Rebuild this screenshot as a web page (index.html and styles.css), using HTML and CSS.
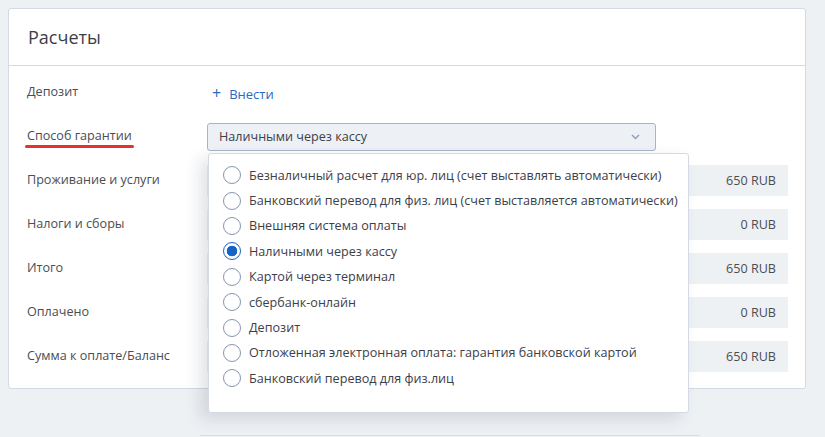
FILE: index.html
```html
<!DOCTYPE html>
<html lang="ru">

<head>
    <meta charset="UTF-8">
    <title>Расчеты</title>
    <link rel="stylesheet" href="styles.css">
</head>

<body>
    <div class="page">
        <!-- Блок расчетов -->
        <section class="card">
            <h2 class="card-title">Расчеты</h2>
            <div class="card-body">
                <div class="row">
                    <div class="label">Депозит</div>
                    <div class="value">
                        <a class="add-link" href="#"><span class="plus">+</span>Внести</a>
                    </div>
                </div>

                <div class="row">
                    <div class="label"><span class="marked">Способ гарантии</span></div>
                    <div class="value select-wrap">
                        <div class="select">
                            <span>Наличными через кассу</span>
                            <svg class="chevron" width="9" height="6" viewBox="0 0 9 6">
                                <path d="M1 1 L4.5 4.5 L8 1" fill="none" stroke="#8d9db6" stroke-width="1.4" />
                            </svg>
                        </div>

                        <!-- Выпадающий список -->
                        <ul class="options">
                            <li><i class="radio"></i>Безналичный расчет для юр. лиц (счет выставлять автоматически)</li>
                            <li><i class="radio"></i>Банковский перевод для физ. лиц (счет выставляется автоматически)</li>
                            <li><i class="radio"></i>Внешняя система оплаты</li>
                            <li class="checked"><i class="radio"></i>Наличными через кассу</li>
                            <li><i class="radio"></i>Картой через терминал</li>
                            <li><i class="radio"></i>сбербанк-онлайн</li>
                            <li><i class="radio"></i>Депозит</li>
                            <li><i class="radio"></i>Отложенная электронная оплата: гарантия банковской картой</li>
                            <li><i class="radio"></i>Банковский перевод для физ.лиц</li>
                        </ul>
                    </div>
                </div>

                <div class="row">
                    <div class="label">Проживание и услуги</div>
                    <div class="value amount">650 RUB</div>
                </div>
                <div class="row">
                    <div class="label">Налоги и сборы</div>
                    <div class="value amount">0 RUB</div>
                </div>
                <div class="row">
                    <div class="label">Итого</div>
                    <div class="value amount">650 RUB</div>
                </div>
                <div class="row">
                    <div class="label">Оплачено</div>
                    <div class="value amount">0 RUB</div>
                </div>
                <div class="row">
                    <div class="label">Сумма к оплате/Баланс</div>
                    <div class="value amount">650 RUB</div>
                </div>
            </div>
        </section>

        <div class="next-block"></div>
    </div>
</body>

</html>
```

FILE: styles.css
```css
* {
    box-sizing: border-box;
}

body {
    margin: 0;
    background-color: #eef1f4;
    font-family: "Open Sans", "Noto Sans", sans-serif;
    font-size: 12.6px;
    color: #4a4d52;
}

.page {
    padding: 8px;
    height: 437px;
    overflow: hidden;
}

/* Карточка */
.card {
    width: 798px;
    background-color: #fff;
    border: 1px solid #d3dae3;
    border-radius: 3px;
}

.card-title {
    margin: 0;
    height: 57px;
    padding: 16px 19px 0;
    font-size: 18px;
    font-weight: 400;
    color: #3c4049;
    border-bottom: 1px solid #d3dae3;
}

.card-body {
    display: flex;
    flex-direction: column;
    gap: 13px;
    padding: 11px 17px 16px 18px;
}

.row {
    display: flex;
    align-items: center;
    height: 31px;
}

.label {
    width: 180px;
    flex-shrink: 0;
    padding-bottom: 2px;
}

.marked {
    position: relative;
}

/* красная пометка */
.marked::after {
    content: "";
    position: absolute;
    left: -2px;
    right: -2px;
    bottom: -4px;
    height: 3px;
    border-radius: 2px;
    background-color: #e5312f;
}

.value {
    flex: 1;
}

.add-link {
    color: #2b68c1;
    text-decoration: none;
    padding-left: 5px;
    font-size: 13px;
}

.add-link .plus {
    font-size: 16px;
    margin-right: 8px;
}

.amount {
    height: 31px;
    line-height: 31px;
    text-align: right;
    padding-right: 12px;
    background-color: #eef1f4;
}

/* Селект */
.select-wrap {
    position: relative;
}

.select {
    display: flex;
    align-items: center;
    justify-content: space-between;
    width: 449px;
    height: 28px;
    padding: 0 15px 0 11px;
    background-color: #edf0f4;
    border: 1px solid #a7b4c8;
    border-radius: 3px;
    color: #3c4049;
}

.options {
    position: absolute;
    top: 30px;
    left: 1px;
    width: 481px;
    height: 260px;
    margin: 0;
    padding: 9px 0 0 14px;
    list-style: none;
    background-color: #fff;
    border: 1px solid #d3dae3;
    border-radius: 3px;
    box-shadow: -8px 6px 16px rgba(40, 55, 80, 0.14);
    z-index: 5;
    color: #3c4049;
}

.options li {
    display: flex;
    align-items: center;
    height: 25.4px;
    white-space: nowrap;
}

.radio {
    width: 18px;
    height: 18px;
    margin-right: 8px;
    border: 1px solid #8696af;
    border-radius: 50%;
    flex-shrink: 0;
}

.checked .radio {
    border-color: #1d63c3;
    background: radial-gradient(circle, #1763c6 0 5px, transparent 5.6px);
}

.next-block {
    width: 500px;
    margin: 46px 0 0 192px;
    border-top: 1px solid #d7dde5;
}
```
